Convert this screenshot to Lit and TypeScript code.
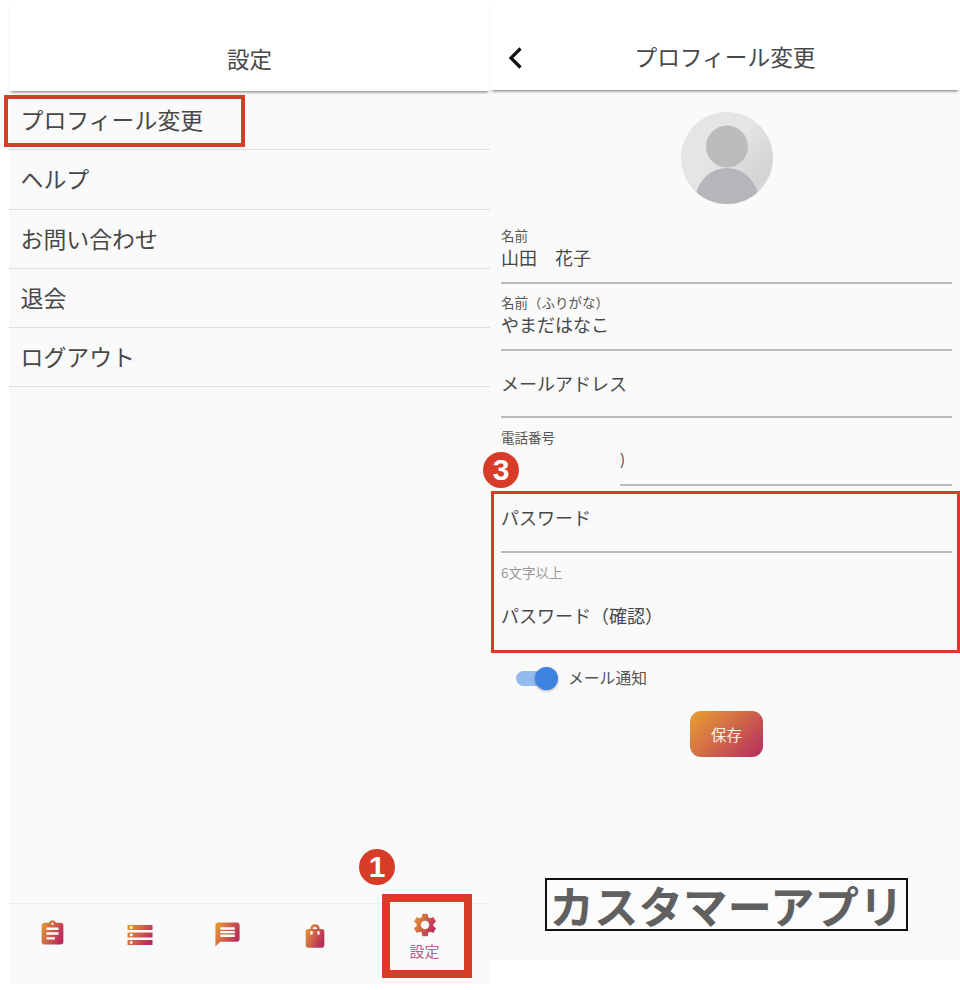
import { LitElement, html, css, svg } from "lit";
import { customElement } from "lit/decorators.js";

const grad = (id: string) => svg`<defs><linearGradient id=${id} x1="0" y1="0" x2="1" y2="0.5"><stop offset="0" stop-color="#e8a030"/><stop offset="1" stop-color="#b92e5c"/></linearGradient></defs>`;

const ICONS: { id: string; d: string; size: number; y: number }[] = [
  { id: "g1", size: 29, y: -1, d: "M19 3h-4.18C14.4 1.84 13.3 1 12 1s-2.4.84-2.82 2H5c-1.1 0-2 .9-2 2v14c0 1.1.9 2 2 2h14c1.1 0 2-.9 2-2V5c0-1.1-.9-2-2-2zm-7 0c.55 0 1 .45 1 1s-.45 1-1 1-1-.45-1-1 .45-1 1-1zm2 14H7v-2h7v2zm3-4H7v-2h10v2zm0-4H7V7h10v2z" },
  { id: "g2", size: 30, y: 0, d: "M2 20h20v-4H2v4zm2-3h2v2H4v-2zM2 4v4h20V4H2zm4 3H4V5h2v2zm-4 7h20v-4H2v4zm2-3h2v2H4v-2z" },
  { id: "g3", size: 29, y: 0, d: "M20 2H4c-1.1 0-1.99.9-1.99 2L2 22l4-4h14c1.1 0 2-.9 2-2V4c0-1.1-.9-2-2-2zm-2 12H6v-2h12v2zm0-3H6V9h12v2zm0-3H6V6h12v2z" },
  { id: "g4", size: 28, y: 2, d: "M18 6h-2c0-2.21-1.79-4-4-4S8 3.79 8 6H6c-1.1 0-2 .9-2 2v12c0 1.1.9 2 2 2h12c1.1 0 2-.9 2-2V8c0-1.1-.9-2-2-2zm-8 4c0 .55-.45 1-1 1s-1-.45-1-1V8h2v2zm2-6c1.1 0 2 .9 2 2h-4c0-1.1.9-2 2-2zm4 6c0 .55-.45 1-1 1s-1-.45-1-1V8h2v2z" },
];
const GEAR = "M19.14 12.94c.04-.3.06-.61.06-.94 0-.32-.02-.64-.07-.94l2.03-1.58c.18-.14.23-.41.12-.61l-1.92-3.32c-.12-.22-.37-.29-.59-.22l-2.39.96c-.5-.38-1.03-.7-1.62-.94l-.36-2.54c-.04-.24-.24-.41-.48-.41h-3.84c-.24 0-.43.17-.47.41l-.36 2.54c-.59.24-1.13.57-1.62.94l-2.39-.96c-.22-.08-.47 0-.59.22L2.74 8.87c-.12.21-.08.47.12.61l2.03 1.58c-.05.3-.09.63-.09.94s.02.64.07.94l-2.03 1.58c-.18.14-.23.41-.12.61l1.92 3.32c.12.22.37.29.59.22l2.39-.96c.5.38 1.03.7 1.62.94l.36 2.54c.05.24.24.41.48.41h3.84c.24 0 .44-.17.47-.41l.36-2.54c.59-.24 1.13-.56 1.62-.94l2.39.96c.22.08.47 0 .59-.22l1.92-3.32c.12-.22.07-.47-.12-.61l-2.01-1.58zM12 15.6c-1.98 0-3.6-1.62-3.6-3.6s1.62-3.6 3.6-3.6 3.6 1.62 3.6 3.6-1.62 3.6-3.6 3.6z";

@customElement("app-root")
export class AppRoot extends LitElement {
  static styles = css`
    :host {
      display: flex;
      position: relative;
      width: 960px;
      height: 990px;
      overflow: hidden;
      background: #fff;
      font-family: "Noto Sans CJK JP", "Noto Sans", sans-serif;
      color: #484848;
    }
    .left {
      margin-left: 9px;
      width: 481px;
      height: 984px;
      display: flex;
      flex-direction: column;
    }
    .right {
      width: 470px;
      height: 960px;
      display: flex;
      flex-direction: column;
    }
    .head {
      box-sizing: border-box;
      flex: none;
      display: flex;
      align-items: center;
      justify-content: center;
      line-height: 32px;
      background: #fff;
      position: relative;
      z-index: 1;
      box-shadow: 0 3px 3px -2px rgba(0, 0, 0, 0.55);
    }
    .left .head { height: 91px; padding-top: 25px; font-size: 22.5px; }
    .right .head { height: 90px; padding-top: 24px; font-size: 22.7px; }
    .back {
      position: absolute;
      left: 16px;
      top: 45px;
      width: 18px;
      height: 26px;
    }
    .body {
      flex: 1;
      background: #fafafa;
      display: flex;
      flex-direction: column;
      min-height: 0;
    }
    .list { flex: 1; }
    .row {
      box-sizing: border-box;
      height: 59.3px;
      padding: 0 0 2px 11.5px;
      display: flex;
      align-items: center;
      font-size: 22.9px;
      border-bottom: 1px solid #dedede;
    }
    .nav {
      height: 80px;
      flex: none;
      border-top: 1px solid #ececec;
      display: grid;
      grid-template-columns: repeat(4, 87.5px) 1fr;
    }
    .tab {
      display: flex;
      flex-direction: column;
      align-items: center;
      padding-top: 16px;
    }
    .tab.active { padding-top: 7px; }
    .tab svg { display: block; }
    .tab-label {
      font-size: 15px;
      line-height: 20px;
      margin-top: 2px;
      color: #b7608f;
    }
    .form {
      flex: 1;
      display: flex;
      flex-direction: column;
      padding: 22px 8px 0 11px;
    }
    .avatar {
      align-self: center;
      display: block;
      width: 92px;
      height: 92px;
      margin: 0 0 22px 0;
    }
    .field {
      border-bottom: 2px solid #bababa;
      margin-bottom: 9px;
    }
    .lab {
      font-size: 13.5px;
      line-height: 19px;
      color: #555;
    }
    .val {
      font-size: 18px;
      line-height: 24px;
      height: 37px;
    }
    .plainval {
      font-size: 18px;
      line-height: 24px;
      padding-top: 11px;
      height: 45px;
    }
    .field.mail { margin-bottom: 10px; }
    .phone {
      margin-left: 119px;
      font-size: 15px;
      line-height: 24px;
      height: 37px;
      border-bottom: 2px solid #bababa;
      margin-bottom: 19px;
    }
    .plainval.pw { padding-top: 0; height: 46px; }
    .hint {
      font-size: 13.5px;
      line-height: 20px;
      color: #999;
      margin-bottom: 21px;
    }
    .plainval.pw2 { padding-top: 0; height: 24px; }
    .toggle-row {
      display: flex;
      align-items: center;
      gap: 12px;
      margin: 39px 0 0 15px;
      height: 24px;
    }
    .switch {
      position: relative;
      width: 33px;
      height: 15px;
      border-radius: 8px;
      background: #94bbee;
      margin-right: 8px;
    }
    .knob {
      position: absolute;
      right: -9px;
      top: -4px;
      width: 23px;
      height: 23px;
      border-radius: 50%;
      background: #3c82de;
      box-shadow: 0 1px 3px rgba(0, 0, 0, 0.3);
    }
    .toggle-label { font-size: 15.8px; line-height: 24px; color: #555; margin-left: -1px; }
    .save {
      align-self: center;
      margin: 21px 0 0 0;
      width: 73px;
      height: 46px;
      border-radius: 11px;
      background: linear-gradient(135deg, #e9a131, #b62c60);
      color: #fbeee6;
      font-size: 15.5px;
      display: flex;
      align-items: center;
      justify-content: center;
    }
    .caption {
      align-self: flex-start;
      margin: 121px 0 0 44px;
      box-sizing: border-box;
      width: 363px;
      height: 53px;
      border: 2px solid #111;
      background: #fcfcfc;
      color: #606060;
      font-size: 44.5px;
      font-weight: 700;
      line-height: 49px;
      display: flex;
      align-items: center;
      justify-content: center;
      white-space: nowrap;
    }
    .mark {
      position: absolute;
      box-sizing: border-box;
      border: 4px solid #d83c29;
    }
    .m1 { left: 382px; top: 894px; width: 90px; height: 84px; border-width: 8px; }
    .m2 { left: 4px; top: 95px; width: 241px; height: 52px; }
    .m3 { left: 491px; top: 491px; width: 469px; height: 162px; border-width: 3.5px; }
    .badge {
      position: absolute;
      width: 36px;
      height: 36px;
      border-radius: 50%;
      background: #d83c29;
      color: #fff;
      font-family: "Liberation Sans", sans-serif;
      font-weight: 700;
      font-size: 30px;
      line-height: 36px;
      text-align: center;
    }
    .b1 { left: 359px; top: 849px; }
    .b2 { left: 31px; top: 54px; }
    .b3 { left: 483px; top: 452px; }
  `;

  render() {
    const rows = ["プロフィール変更", "ヘルプ", "お問い合わせ", "退会", "ログアウト"];
    return html`
      <section class="left">
        <header class="head">設定</header>
        <div class="body">
          <div class="list">
            ${rows.map((r) => html`<div class="row">${r}</div>`)}
          </div>
          <nav class="nav">
            ${ICONS.map(
              (i) => html`<div class="tab">
                <svg width=${i.size} height=${i.size} viewBox="0 0 24 24" style="margin-top:${i.y}px">
                  ${grad(i.id)}
                  <path d=${i.d} fill="url(#${i.id})"></path>
                </svg>
              </div>`
            )}
            <div class="tab active">
              <svg width="28" height="28" viewBox="0 0 24 24">
                ${grad("g5")}
                <path d=${GEAR} fill="url(#g5)"></path>
              </svg>
              <span class="tab-label">設定</span>
            </div>
          </nav>
        </div>
      </section>

      <section class="right">
        <header class="head">
          <svg class="back" viewBox="0 0 18 26">
            <path d="M14.5 3.5 L5 13 L14.5 22.5" fill="none" stroke="#111" stroke-width="3.2"></path>
          </svg>
          プロフィール変更
        </header>
        <div class="body">
          <div class="form">
            <svg class="avatar" viewBox="0 0 92 92">
              <defs>
                <linearGradient id="av" x1="0" y1="0" x2="1" y2="1">
                  <stop offset="0.45" stop-color="#e4e5e7"></stop>
                  <stop offset="0.8" stop-color="#d3d3d5"></stop>
                  <stop offset="1" stop-color="#e0e0e2"></stop>
                </linearGradient>
                <clipPath id="avc"><circle cx="46" cy="46" r="46"></circle></clipPath>
              </defs>
              <circle cx="46" cy="46" r="46" fill="url(#av)"></circle>
              <g clip-path="url(#avc)">
                <circle cx="46" cy="34.5" r="21" fill="#bcbcbf"></circle>
                <ellipse cx="46" cy="90" rx="32" ry="34" fill="#b5b6b9"></ellipse>
              </g>
            </svg>
            <div class="field">
              <div class="lab">名前</div>
              <div class="val">山田　花子</div>
            </div>
            <div class="field">
              <div class="lab">名前（ふりがな）</div>
              <div class="val">やまだはなこ</div>
            </div>
            <div class="field mail">
              <div class="plainval">メールアドレス</div>
            </div>
            <div class="lab">電話番号</div>
            <div class="phone">)</div>
            <div class="field">
              <div class="plainval pw">パスワード</div>
            </div>
            <div class="hint">6文字以上</div>
            <div class="plainval pw2">パスワード（確認）</div>
            <div class="toggle-row">
              <div class="switch"><div class="knob"></div></div>
              <span class="toggle-label">メール通知</span>
            </div>
            <div class="save">保存</div>
            <div class="caption">カスタマーアプリ</div>
          </div>
        </div>
      </section>

      <div class="mark m1"></div>
      <div class="mark m2"></div>
      <div class="mark m3"></div>
      <div class="badge b1">1</div>
      <div class="badge b2">2</div>
      <div class="badge b3">3</div>
    `;
  }
}
